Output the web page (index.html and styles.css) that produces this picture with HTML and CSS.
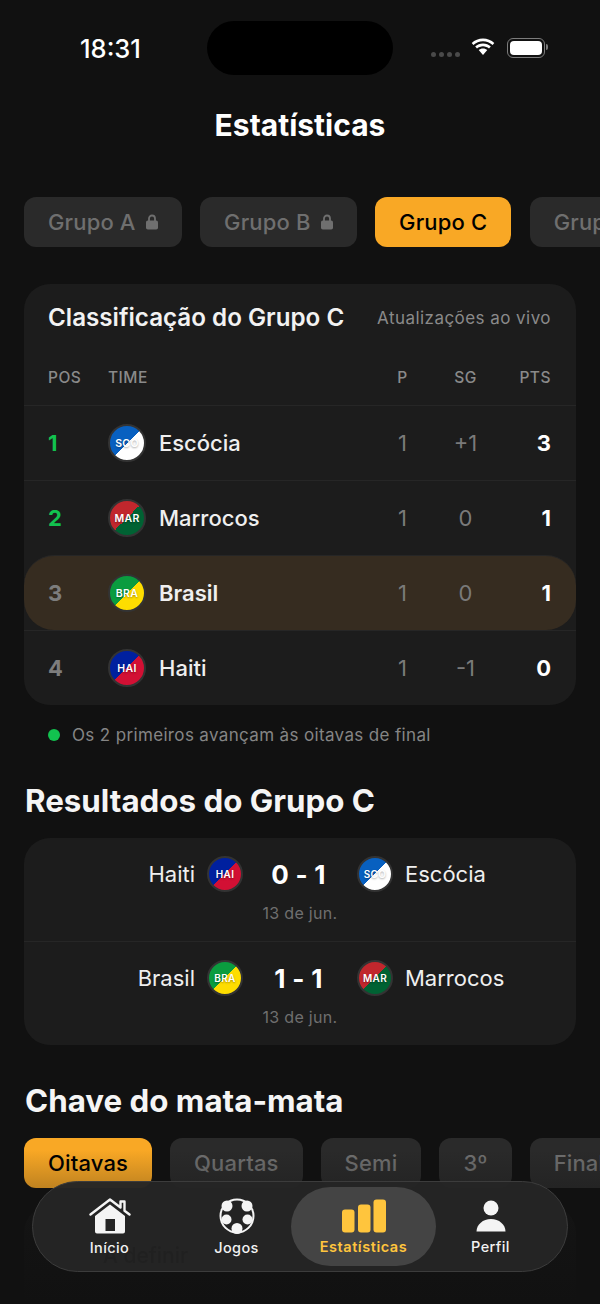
FILE: index.html
```html
<!DOCTYPE html>
<html lang="pt-BR">
<head>
    <meta charset="UTF-8">
    <meta name="viewport" content="width=device-width, initial-scale=1.0">
    <title>Estatísticas</title>
    <link rel="stylesheet" href="styles.css">
</head>
<body>
    <div class="screen">
        <div class="island"></div>

        <div class="status-bar">
            <span class="status-time">18:31</span>
            <div class="status-icons">
                <div class="signal"><i></i><i></i><i></i><i></i></div>
                <svg class="wifi" width="24" height="18" viewBox="0 0 24 18">
                    <path d="M12 3.2c3.7 0 7 1.4 9.6 3.8l1.7-2C20.3 2.2 16.3.5 12 .5S3.7 2.200.7 5l1.7 2C5 4.600 8.300 3.200 12 3.200z" fill="#fff"/>
                    <path d="M12 8.300c2.300 0 4.400.9 6 2.300l1.800-2C17.700 6.700 15 5.500 12 5.500s-5.700 1.200-7.800 3.100l1.800 2c1.600-1.400 3.700-2.300 6-2.300z" fill="#fff"/>
                    <path d="M12 10.500c-1.700 0-3.200.6-4.300 1.600L12 17l4.300-4.900c-1.100-1-2.600-1.600-4.300-1.600z" fill="#fff"/>
                </svg>
                <div class="battery"><div class="battery-fill"></div></div>
            </div>
        </div>

        <h1 class="page-title">Estatísticas</h1>

        <div class="pill-row group-tabs">
            <div class="pill">Grupo A
                <svg class="lock" width="12" height="16" viewBox="0 0 12 16"><path d="M3 7V4.500a3 3 0 0 1 6 0V7" fill="none" stroke="currentColor" stroke-width="1.8"/><rect y="6.500" width="12" height="9" rx="1.8" fill="currentColor"/></svg>
            </div>
            <div class="pill">Grupo B
                <svg class="lock" width="12" height="16" viewBox="0 0 12 16"><path d="M3 7V4.500a3 3 0 0 1 6 0V7" fill="none" stroke="currentColor" stroke-width="1.8"/><rect y="6.500" width="12" height="9" rx="1.8" fill="currentColor"/></svg>
            </div>
            <div class="pill active">Grupo C</div>
            <div class="pill">Grupo D</div>
        </div>

        <section class="card standings">
            <div class="card-head">
                <h2>Classificação do Grupo C</h2>
                <span>Atualizações ao vivo</span>
            </div>
            <div class="row row-labels">
                <span class="col-pos">POS</span>
                <span class="col-team">TIME</span>
                <span class="col-num">P</span>
                <span class="col-num">SG</span>
                <span class="col-pts">PTS</span>
            </div>
            <div class="row team-row">
                <span class="col-pos green">1</span>
                <div class="col-team"><div class="flag sco">SCO</div>Escócia</div>
                <span class="col-num">1</span>
                <span class="col-num">+1</span>
                <span class="col-pts">3</span>
            </div>
            <div class="row team-row">
                <span class="col-pos green">2</span>
                <div class="col-team"><div class="flag mar">MAR</div>Marrocos</div>
                <span class="col-num">1</span>
                <span class="col-num">0</span>
                <span class="col-pts">1</span>
            </div>
            <div class="row team-row mine">
                <span class="col-pos">3</span>
                <div class="col-team"><div class="flag bra">BRA</div>Brasil</div>
                <span class="col-num">1</span>
                <span class="col-num">0</span>
                <span class="col-pts">1</span>
            </div>
            <div class="row team-row">
                <span class="col-pos">4</span>
                <div class="col-team"><div class="flag hai">HAI</div>Haiti</div>
                <span class="col-num">1</span>
                <span class="col-num">-1</span>
                <span class="col-pts">0</span>
            </div>
        </section>

        <div class="legend"><i class="legend-dot"></i>Os 2 primeiros avançam às oitavas de final</div>

        <h2 class="section-title">Resultados do Grupo C</h2>

        <section class="card results">
            <div class="match">
                <div class="match-line">
                    <div class="side home">Haiti<div class="flag hai">HAI</div></div>
                    <div class="score">0 - 1</div>
                    <div class="side"><div class="flag sco">SCO</div>Escócia</div>
                </div>
                <div class="match-date">13 de jun.</div>
            </div>
            <div class="match">
                <div class="match-line">
                    <div class="side home">Brasil<div class="flag bra">BRA</div></div>
                    <div class="score">1 - 1</div>
                    <div class="side"><div class="flag mar">MAR</div>Marrocos</div>
                </div>
                <div class="match-date">13 de jun.</div>
            </div>
        </section>

        <h2 class="section-title bracket-title">Chave do mata-mata</h2>

        <div class="pill-row round-tabs">
            <div class="pill active">Oitavas</div>
            <div class="pill">Quartas</div>
            <div class="pill">Semi</div>
            <div class="pill">3º</div>
            <div class="pill">Final</div>
        </div>

        <section class="card bracket">
            <div class="bracket-team">A definir</div>
        </section>

        <div class="bottom-fade"></div>

        <nav class="tab-bar">
            <div class="tab">
                <svg width="42" height="36" viewBox="0 0 42 36">
                    <path d="M1.500 16.500 21 1.500l10.500 8V3.500h4v9.200l5 3.800" fill="none" stroke="#f4f4f4" stroke-width="2.400" stroke-linecap="round" stroke-linejoin="round"/>
                    <path fill-rule="evenodd" d="M21 6.500 36 18v15.500a2 2 0 0 1-2 2H8a2 2 0 0 1-2-2V18zM16.500 21v12H26V21z" fill="#f4f4f4"/>
                </svg>
                <span>Início</span>
            </div>
            <div class="tab">
                <svg width="36" height="36" viewBox="0 0 36 36">
                    <circle cx="18" cy="18" r="17.500" fill="#f4f4f4"/>
                    <circle cx="18" cy="18" r="15.500" fill="#232323"/>
                    <circle cx="8" cy="8" r="5.500" fill="#f4f4f4"/>
                    <circle cx="28" cy="8" r="5.500" fill="#f4f4f4"/>
                    <circle cx="7.500" cy="21.500" r="5" fill="#f4f4f4"/>
                    <circle cx="28.500" cy="21.500" r="5" fill="#f4f4f4"/>
                    <circle cx="18" cy="30.500" r="5.500" fill="#f4f4f4"/>
                </svg>
                <span>Jogos</span>
            </div>
            <div class="tab current">
                <svg width="44" height="34" viewBox="0 0 44 34">
                    <rect x="0" y="10.500" width="12.500" height="23" rx="3" fill="#ffc53d"/>
                    <rect x="16" y="5.500" width="12.500" height="28" rx="3" fill="#ffc53d"/>
                    <rect x="31.500" y="0.500" width="12.500" height="33" rx="3" fill="#ffc53d"/>
                </svg>
                <span>Estatísticas</span>
            </div>
            <div class="tab">
                <svg width="30" height="34" viewBox="0 0 30 34">
                    <circle cx="15" cy="9" r="7.500" fill="#f4f4f4"/>
                    <path d="M.5 32.500C.5 25.500 7 20 15 20s14.500 5.500 14.500 12.500z" fill="#f4f4f4"/>
                </svg>
                <span>Perfil</span>
            </div>
        </nav>
    </div>
</body>
</html>
```

FILE: styles.css
```css
* {
    margin: 0;
    padding: 0;
    box-sizing: border-box;
}

body {
    width: 600px;
    height: 1304px;
    overflow: hidden;
    background: #111111;
    font-family: Inter, 'Liberation Sans', sans-serif;
    color: #f2f2f2;
}

.screen {
    position: relative;
    width: 600px;
    height: 1304px;
    overflow: hidden;
    padding-top: 30px;
}

.island {
    position: absolute;
    left: 207px;
    top: 21px;
    width: 186px;
    height: 54px;
    border-radius: 27px;
    background: #000;
}

.status-bar {
    display: flex;
    justify-content: space-between;
    align-items: center;
    height: 36px;
    padding: 0 55px 0 80px;
}

.status-time {
    font-size: 25.5px;
    font-weight: 500;
    color: #fff;
}

.status-icons {
    display: flex;
    align-items: center;
    gap: 11px;
}

.signal {
    display: flex;
    gap: 3px;
    margin-top: 12px;
}

.signal i {
    width: 5px;
    height: 5px;
    border-radius: 50%;
    background: #4a4a4a;
}

.wifi {
    margin: -2px 1px 0 0;
}

.battery {
    position: relative;
    width: 38px;
    height: 20px;
    padding: 2px;
    border: 1.5px solid #7c7c7c;
    border-radius: 6px;
}

.battery::after {
    content: "";
    position: absolute;
    right: -4px;
    top: 5px;
    width: 2px;
    height: 6px;
    border-radius: 0 2px 2px 0;
    background: #7c7c7c;
}

.battery-fill {
    height: 100%;
    border-radius: 4px;
    background: #fff;
}

.page-title {
    margin-top: 41px;
    text-align: center;
    font-size: 30px;
    line-height: 36px;
    font-weight: 700;
    color: #fff;
}

.pill-row {
    display: flex;
    gap: 18px;
    padding-left: 24px;
    white-space: nowrap;
}

.group-tabs {
    gap: 18.5px;
    margin-top: 54px;
}

.pill {
    display: flex;
    flex-shrink: 0;
    align-items: center;
    gap: 10px;
    height: 50px;
    padding: 0 24px;
    border-radius: 12px;
    background: #2a2a2a;
    color: #6f6f6f;
    font-size: 22px;
    font-weight: 500;
    letter-spacing: 0.15px;
}

.pill.active {
    background: #f9a825;
    color: #000;
}

.card {
    margin: 0 24px;
    border-radius: 26px;
    background: #1c1c1c;
}

.standings {
    margin-top: 37px;
    height: 421px;
}

.card-head {
    display: flex;
    justify-content: space-between;
    align-items: center;
    padding: 17px 25px 0 24px;
    height: 50px;
}

.card-head h2 {
    font-size: 24.2px;
    font-weight: 600;
    color: #f2f2f2;
}

.card-head span {
    font-size: 17px;
    color: #8a8a8a;
    letter-spacing: 0.45px;
}

.row {
    display: flex;
    align-items: center;
    padding: 0 25px 0 24px;
}

.row-labels {
    height: 71px;
    padding-top: 15px;
    font-size: 15.5px;
    font-weight: 500;
    color: #8a8a8a;
    letter-spacing: 0.5px;
}

.col-pos {
    width: 60px;
    flex-shrink: 0;
}

.col-team {
    display: flex;
    align-items: center;
    gap: 13px;
    flex: 1;
}

.col-num {
    width: 63px;
    text-align: center;
}

.col-pts {
    width: 54px;
    text-align: right;
}

.team-row {
    height: 75px;
    border-top: 1px solid #262626;
    font-size: 22px;
}

.team-row .col-pos {
    font-weight: 700;
    color: #7d7d7d;
}

.team-row .col-pos.green {
    color: #12c24f;
}

.team-row .col-team {
    font-weight: 500;
    color: #efefef;
}

.team-row .col-num {
    color: #7a7a7a;
    font-weight: 400;
}

.team-row .col-pts {
    font-weight: 700;
    color: #fff;
}

.team-row.mine {
    border-radius: 30px;
    background: #362c20;
}

.team-row.mine .col-team {
    font-weight: 600;
}

.flag {
    display: flex;
    flex-shrink: 0;
    align-items: center;
    justify-content: center;
    width: 38px;
    height: 38px;
    border: 2px solid #333;
    border-radius: 50%;
    color: #fff;
    font-size: 10.5px;
    font-weight: 600;
    letter-spacing: 0.3px;
    text-shadow: 0 1px 2px rgba(0, 0, 0, 0.35);
}

.flag.sco {
    background: linear-gradient(135deg, #0860c0 50%, #fff 50%);
}

.flag.mar {
    background: linear-gradient(135deg, #c1272d 50%, #006233 50%);
}

.flag.bra {
    background: linear-gradient(135deg, #0a9c3f 50%, #fedd00 50%);
}

.flag.hai {
    background: linear-gradient(135deg, #00209f 50%, #d21034 50%);
}

.legend {
    display: flex;
    align-items: center;
    gap: 12px;
    margin-top: 19px;
    padding-left: 48px;
    height: 22px;
    font-size: 17px;
    color: #858585;
    letter-spacing: 0.35px;
}

.legend-dot {
    width: 12px;
    height: 12px;
    border-radius: 50%;
    background: #12c24f;
}

.section-title {
    margin-top: 37px;
    padding-left: 25px;
    font-size: 31.3px;
    line-height: 36px;
    font-weight: 700;
    color: #f5f5f5;
}

.results {
    margin-top: 19px;
    height: 207px;
}

.match {
    height: 103px;
    padding-top: 18px;
}

.match + .match {
    border-top: 1px solid #262626;
    height: 104px;
}

.match-line {
    display: flex;
    align-items: center;
    justify-content: center;
}

.side {
    display: flex;
    flex: 1;
    align-items: center;
    gap: 12px;
    font-size: 22px;
    font-weight: 400;
    color: #efefef;
}

.side.home {
    justify-content: flex-end;
}

.side .flag {
    width: 36px;
    height: 36px;
    font-size: 10px;
}

.score {
    width: 114px;
    padding-right: 3px;
    text-align: center;
    font-size: 26px;
    font-weight: 700;
    letter-spacing: 0.3px;
    color: #fff;
}

.match-date {
    margin-top: 11px;
    text-align: center;
    font-size: 16px;
    color: #6f6f6f;
    letter-spacing: 0.3px;
}

.section-title.bracket-title {
    margin-top: 38px;
}

.round-tabs {
    margin-top: 19px;
}

.bracket {
    margin-top: 18px;
    height: 200px;
    padding: 37px 0 0 79px;
    background: #161616;
}

/* shows through the bar as a dark smudge */
.bracket-team {
    position: relative;
    z-index: 2;
    font-size: 21px;
    font-weight: 500;
    color: rgba(0, 0, 0, 0.1);
    filter: blur(0.6px);
}

.bottom-fade {
    position: absolute;
    left: 0;
    right: 0;
    top: 1150px;
    height: 154px;
    background: linear-gradient(rgba(17, 17, 17, 0), #111111);
}

.tab-bar {
    position: absolute;
    left: 32px;
    top: 1181px;
    display: flex;
    align-items: center;
    width: 536px;
    height: 91px;
    padding-left: 13px;
    border: 1.5px solid #3c3c3c;
    border-radius: 46px;
    background: rgba(37, 37, 37, 0.97);
}

.tab {
    display: flex;
    flex-direction: column;
    align-items: center;
    justify-content: center;
    gap: 5px;
    width: 127px;
    height: 79px;
    font-size: 14.5px;
    font-weight: 500;
    color: #f2f2f2;
    letter-spacing: 0.4px;
}

.tab.current {
    width: 145px;
    margin: 0 -9px;
    border-radius: 40px;
    background: #444444;
    color: #ffc53d;
    font-weight: 600;
    letter-spacing: 0.55px;
}
```
